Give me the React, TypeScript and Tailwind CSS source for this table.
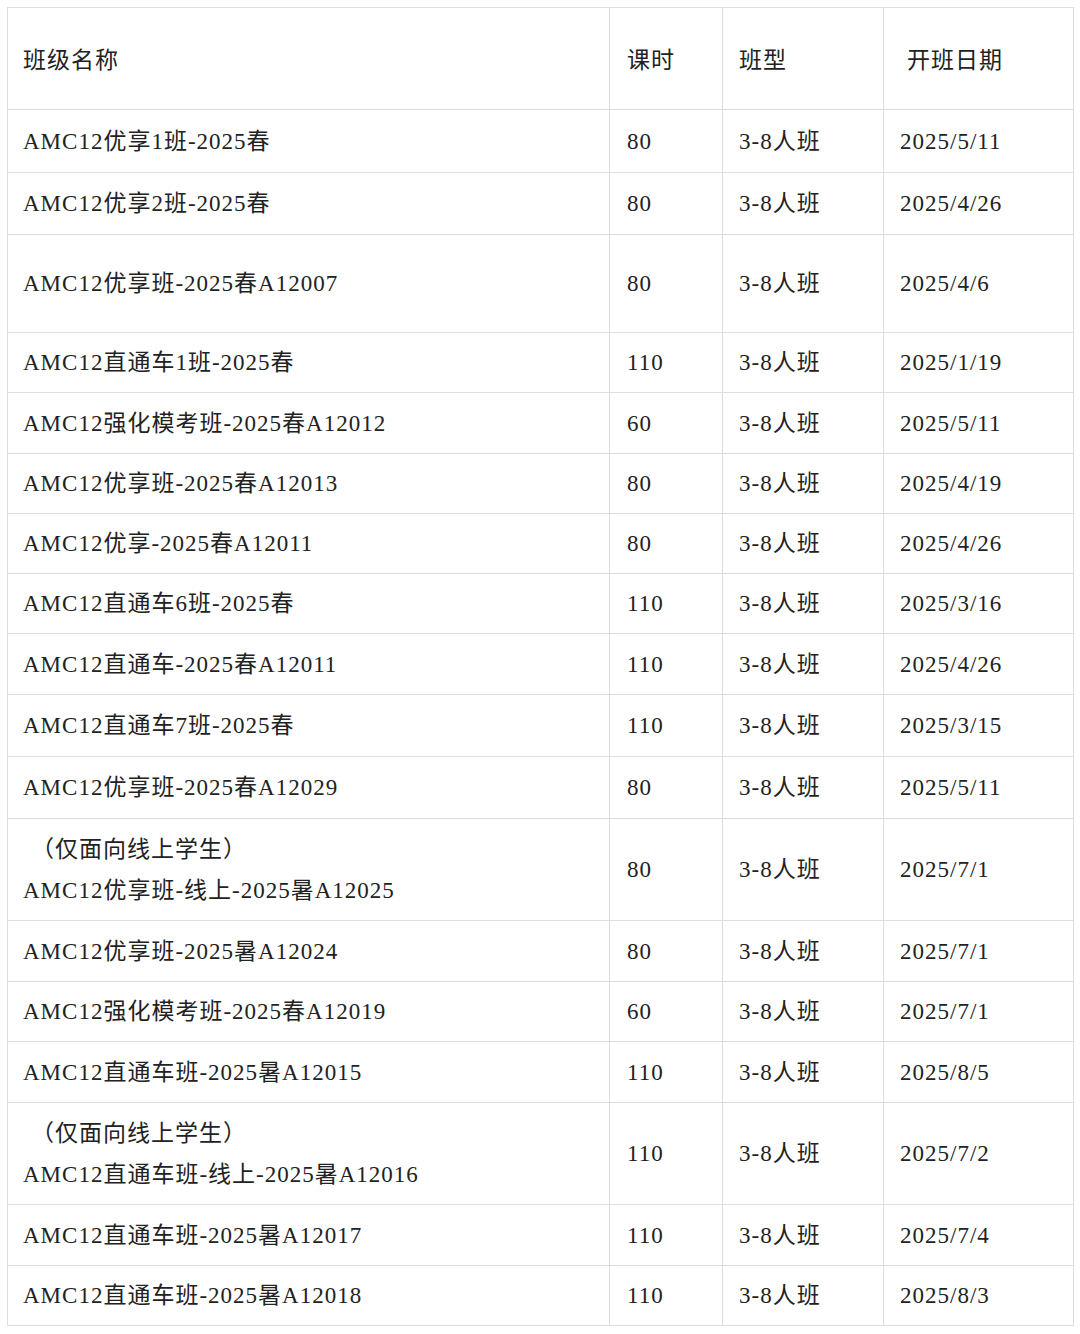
const ROWS: { name: string[]; hours: string; type: string; date: string; h: string }[] = [
  { name: ['AMC12优享1班-2025春'], hours: '80', type: '3-8人班', date: '2025/5/11', h: 'h-[63px]' },
  { name: ['AMC12优享2班-2025春'], hours: '80', type: '3-8人班', date: '2025/4/26', h: 'h-[62px]' },
  { name: ['AMC12优享班-2025春A12007'], hours: '80', type: '3-8人班', date: '2025/4/6', h: 'h-[98px]' },
  { name: ['AMC12直通车1班-2025春'], hours: '110', type: '3-8人班', date: '2025/1/19', h: 'h-[60px]' },
  { name: ['AMC12强化模考班-2025春A12012'], hours: '60', type: '3-8人班', date: '2025/5/11', h: 'h-[61px]' },
  { name: ['AMC12优享班-2025春A12013'], hours: '80', type: '3-8人班', date: '2025/4/19', h: 'h-[60px]' },
  { name: ['AMC12优享-2025春A12011'], hours: '80', type: '3-8人班', date: '2025/4/26', h: 'h-[60px]' },
  { name: ['AMC12直通车6班-2025春'], hours: '110', type: '3-8人班', date: '2025/3/16', h: 'h-[60px]' },
  { name: ['AMC12直通车-2025春A12011'], hours: '110', type: '3-8人班', date: '2025/4/26', h: 'h-[61px]' },
  { name: ['AMC12直通车7班-2025春'], hours: '110', type: '3-8人班', date: '2025/3/15', h: 'h-[62px]' },
  { name: ['AMC12优享班-2025春A12029'], hours: '80', type: '3-8人班', date: '2025/5/11', h: 'h-[62px]' },
  { name: ['（仅面向线上学生）', 'AMC12优享班-线上-2025暑A12025'], hours: '80', type: '3-8人班', date: '2025/7/1', h: 'h-[102px]' },
  { name: ['AMC12优享班-2025暑A12024'], hours: '80', type: '3-8人班', date: '2025/7/1', h: 'h-[61px]' },
  { name: ['AMC12强化模考班-2025春A12019'], hours: '60', type: '3-8人班', date: '2025/7/1', h: 'h-[60px]' },
  { name: ['AMC12直通车班-2025暑A12015'], hours: '110', type: '3-8人班', date: '2025/8/5', h: 'h-[61px]' },
  { name: ['（仅面向线上学生）', 'AMC12直通车班-线上-2025暑A12016'], hours: '110', type: '3-8人班', date: '2025/7/2', h: 'h-[102px]' },
  { name: ['AMC12直通车班-2025暑A12017'], hours: '110', type: '3-8人班', date: '2025/7/4', h: 'h-[61px]' },
  { name: ['AMC12直通车班-2025暑A12018'], hours: '110', type: '3-8人班', date: '2025/8/3', h: 'h-[60px]' },
];

const cell = 'flex flex-col justify-center border-r border-b border-[#dedede]';

function Row({ h, cols, head }: { h: string; cols: React.ReactNode[]; head?: boolean }) {
  const top = head ? 'pt-[4px]' : '';
  return (
    <div className={`flex ${h}`}>
      <div className={`${cell} ${top} w-[602px] pl-[15px]`}>{cols[0]}</div>
      <div className={`${cell} ${top} w-[113px] pl-[17px]`}>{cols[1]}</div>
      <div className={`${cell} ${top} w-[161px] pl-[16px]`}>{cols[2]}</div>
      <div className={`${cell} ${top} w-[190px] pl-[16px]`}>{cols[3]}</div>
    </div>
  );
}

export default function App() {
  return (
    <div
      className="min-h-[1334px] w-[1080px] bg-white pl-[7px] pt-[7px] text-[23px] leading-[41px] tracking-[1px] text-[#222222]"
      style={{ fontFamily: '"Liberation Serif", "Noto Sans CJK SC", serif' }}
    >
      <div className="w-[1067px] border-l border-t border-[#dedede]">
        <Row head h="h-[102px]" cols={['班级名称', '课时', '班型', <span className="pl-[7px]">开班日期</span>]} />
        {ROWS.map((r, i) => (
          <Row
            key={i}
            h={r.h}
            cols={[
              r.name.map((line, j) => (
                <div key={j} className={j === 0 && r.name.length > 1 ? 'pl-[8px]' : ''}>
                  {line}
                </div>
              )),
              r.hours,
              r.type,
              r.date,
            ]}
          />
        ))}
      </div>
    </div>
  );
}
